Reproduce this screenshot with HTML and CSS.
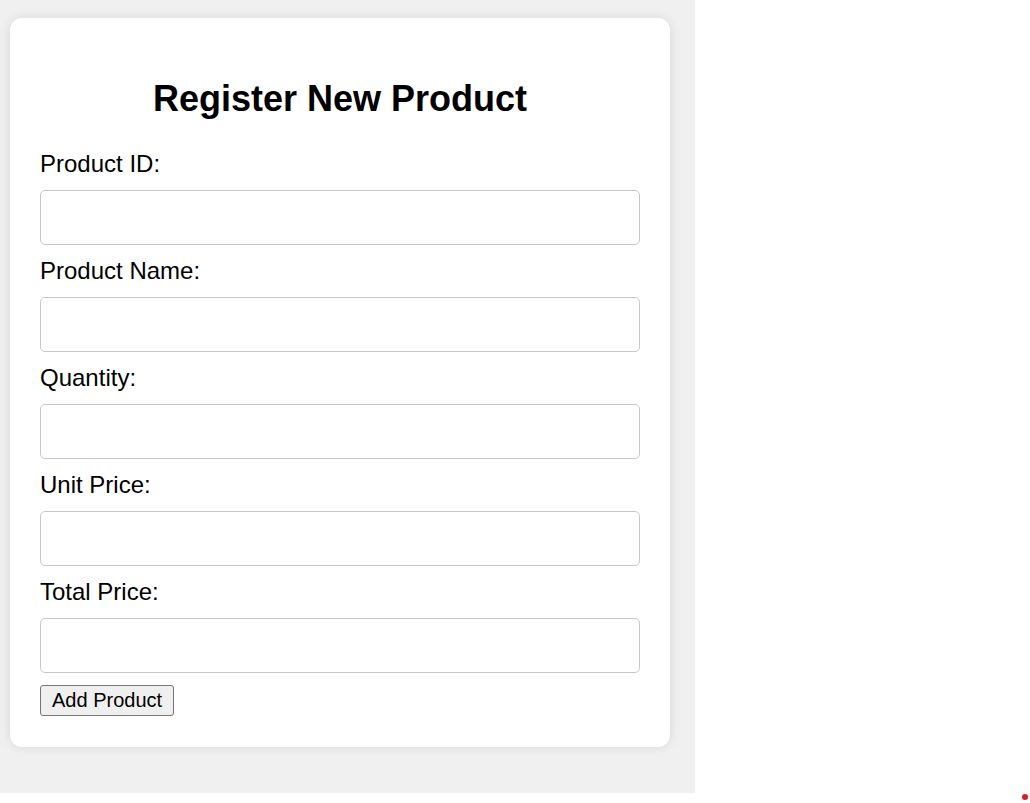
FILE: index.html
```html
<!DOCTYPE html>
<html lang="en">
<head>
<meta charset="utf-8">
<title>Register New Product</title>
<link rel="stylesheet" href="styles.css">
</head>
<body>
<div class="page">
  <div class="card">
    <h2 class="title">Register New Product</h2>
    <form class="form">
      <label class="label" for="pid">Product ID:</label>
      <input class="field" id="pid" type="text">
      <label class="label" for="pname">Product Name:</label>
      <input class="field" id="pname" type="text">
      <label class="label" for="qty">Quantity:</label>
      <input class="field" id="qty" type="text">
      <label class="label" for="uprice">Unit Price:</label>
      <input class="field" id="uprice" type="text">
      <label class="label" for="tprice">Total Price:</label>
      <input class="field" id="tprice" type="text">
      <button class="btn" type="button">Add Product</button>
    </form>
  </div>
</div>
<span class="dot"></span>
</body>
</html>
```
FILE: styles.css
```css
html, body {
  margin: 0;
  padding: 0;
  background: #fff;
}
body {
  font-family: "Liberation Sans", Arial, sans-serif;
  font-size: 24px;
  color: #000;
}
.page {
  box-sizing: border-box;
  width: 695px;
  height: 793px;
  background: #f0f0f0;
  padding: 18px 25px 0 10px;
}
.card {
  background: #fff;
  border-radius: 12px;
  box-shadow: 0 0 12px rgba(0, 0, 0, 0.1);
  padding: 30px 30px 30px 30px;
}
.title {
  font-size: 36px;
  font-weight: bold;
  text-align: center;
  margin: 30px 0 30px 0;
  line-height: 42px;
}
.form {
  display: flex;
  flex-direction: column;
  align-items: flex-start;
}
.label {
  display: block;
  line-height: 28px;
}
.field {
  box-sizing: border-box;
  width: 100%;
  height: 55px;
  margin: 12px 0 12px 0;
  border: 1px solid #c8c8c8;
  border-radius: 5px;
  font-size: 24px;
  padding: 0 12px;
  background: #fff;
}
.btn {
  font-family: "Liberation Sans", Arial, sans-serif;
  font-size: 20px;
  line-height: 23px;
  padding: 3px 11px;
  border: 1px solid #767676;
  border-radius: 3px;
  background: #efefef;
  color: #000;
  margin-bottom: 1px;
}
.dot {
  position: absolute;
  left: 1022px;
  top: 794px;
  width: 6px;
  height: 6px;
  border-radius: 50%;
  background: #d42020;
}
```
